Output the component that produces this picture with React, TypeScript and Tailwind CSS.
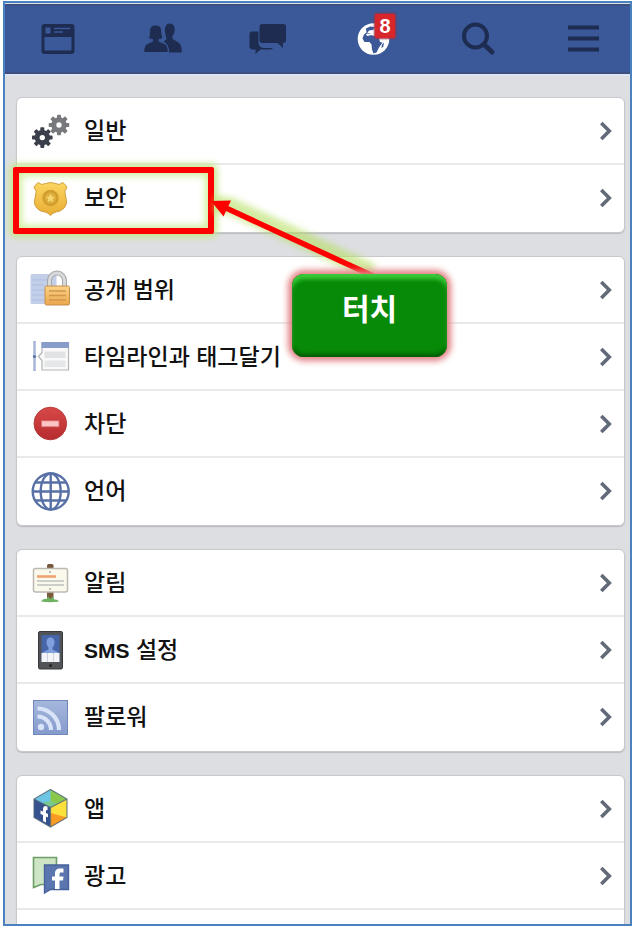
import type { ReactNode } from "react";

const teeth = [0, 45, 90, 135, 180, 225, 270, 315];

function Gear({ x, y, fill }: { x: number; y: number; fill: string }) {
  return (
    <g transform={`translate(${x} ${y})`}>
      <circle r="5.2" fill="none" stroke={fill} strokeWidth="5" />
      {teeth.map((a) => (
        <rect key={a} x="-2" y="-10.3" width="4" height="4" rx="0.8" fill={fill} transform={`rotate(${a})`} />
      ))}
    </g>
  );
}

function Icon({ children }: { children: ReactNode }) {
  return (
    <svg viewBox="0 0 40 40" className="h-10 w-10 shrink-0" aria-hidden="true">
      {children}
    </svg>
  );
}

const icons = {
  general: (
    <Icon>
      <Gear x={29} y={14} fill="#77797d" />
      <Gear x={12.3} y={26.6} fill="#3a3f4b" />
    </Icon>
  ),
  security: (
    <Icon>
      <defs>
        <linearGradient id="gold" x1="0" y1="0" x2="0" y2="1">
          <stop offset="0" stopColor="#fbd560" />
          <stop offset="1" stopColor="#e9ae35" />
        </linearGradient>
      </defs>
      <path
        d="M8 4.500 Q12 8 15.500 5.500 L20.500 4.500 L25.500 5.500 Q29 8 33 4.500 L37 9 Q33.500 13 35.500 18 Q38 26 34 30 Q31 33.500 26 34 Q23 34.500 20.500 37.500 Q18 34.500 15 34 Q9.500 33.500 6.800 30 Q3 26 5.500 18 Q7.500 13 4 9 Z"
        fill="url(#gold)"
        stroke="#cf9c3a"
        strokeWidth="1"
      />
      <circle cx="20.500" cy="20" r="8.200" fill="#d19d2c" />
      <circle cx="20.500" cy="20" r="5.800" fill="#dfae3c" />
      <path d="M20.500 15.800 l1.300 2.800 3 .3 -2.200 2.100 .6 3 -2.700 -1.500 -2.700 1.500 .6 -3 -2.200 -2.100 3 -.3z" fill="#f8d873" />
    </Icon>
  ),
  privacy: (
    <Icon>
      <defs>
        <linearGradient id="lockBody" x1="0" y1="0" x2="0" y2="1">
          <stop offset="0" stopColor="#fbd38a" />
          <stop offset="1" stopColor="#eba64c" />
        </linearGradient>
      </defs>
      <rect x="0.500" y="4" width="26" height="30" rx="1.500" fill="#c3cee9" />
      <path d="M2 10h16M2 15h12M2 20h12M2 25h12M2 30h12" stroke="#b5c3e3" strokeWidth="1.300" />
      <path d="M19.500 16V10.500a7.500 7.500 0 0 1 15 0V16" fill="none" stroke="#a7a8ab" strokeWidth="5" />
      <path d="M19.500 16V10.500a7.500 7.500 0 0 1 15 0V16" fill="none" stroke="#d8d9da" strokeWidth="3" />
      <rect x="15" y="16" width="24.500" height="19" rx="1.500" fill="url(#lockBody)" stroke="#c28e4b" />
      <path d="M19 21h17M19 25.500h17M19 30h17" stroke="#d1974c" strokeWidth="1.300" />
    </Icon>
  ),
  timeline: (
    <Icon>
      <path d="M4.500 4v30" stroke="#a9b8d9" strokeWidth="2.600" />
      <circle cx="4.500" cy="19.500" r="1.600" fill="#5a72a8" />
      <path d="M12 6h26.500v27H12v-9.500L8.500 19.500 12 15.500z" fill="#f9f9f9" stroke="#b4b5b8" strokeWidth="1.200" />
      <rect x="11.500" y="5" width="27.500" height="6" fill="#879cc9" />
      <rect x="14.500" y="14.500" width="21" height="6.500" fill="#e1e2e3" />
      <rect x="14.500" y="23.500" width="21" height="6.500" fill="#e6e7e8" />
    </Icon>
  ),
  block: (
    <Icon>
      <defs>
        <linearGradient id="stop" x1="0" y1="0" x2="0" y2="1">
          <stop offset="0" stopColor="#d84848" />
          <stop offset="1" stopColor="#b62c2f" />
        </linearGradient>
      </defs>
      <circle cx="20.300" cy="19.500" r="16.300" fill="url(#stop)" stroke="#b33a3b" />
      <rect x="11.500" y="16.800" width="17.500" height="6" fill="#fbc4c5" stroke="#d96a6b" strokeWidth="0.800" />
    </Icon>
  ),
  language: (
    <Icon>
      <g fill="none" stroke="#5870a6" strokeWidth="2.400">
        <circle cx="20.700" cy="20.500" r="18" />
        <ellipse cx="20.700" cy="20.500" rx="10" ry="18" />
        <path d="M20.700 2v37M3 20.500h36M6 11.500h30M6 29.500h30" />
      </g>
    </Icon>
  ),
  notifications: (
    <Icon>
      <rect x="17" y="1" width="6.500" height="6" rx="1.500" fill="#75593d" />
      <rect x="17" y="28" width="6.500" height="9" fill="#7a5b3c" />
      <path d="M11 38.500q2-3.500 6-2.500l1-3 2 3 3-2.500 1 3q4-.5 5 2-9 1.500-18 0z" fill="#6fb061" />
      <rect x="3.500" y="5.500" width="34" height="23.500" rx="2" fill="#fbf9ec" stroke="#bcb9b2" strokeWidth="1.500" />
      <path d="M7 13.500h19" stroke="#efa371" strokeWidth="2.600" />
      <path d="M7 18h27M7 22h27" stroke="#bfbfbd" strokeWidth="1.700" />
      <circle cx="20" cy="9" r="1" fill="#aaa" />
      <circle cx="20" cy="26" r="1" fill="#aaa" />
    </Icon>
  ),
  sms: (
    <Icon>
      <rect x="8.500" y="1.500" width="24" height="37.500" rx="1.500" fill="#515357" stroke="#36383c" />
      <rect x="11.500" y="5" width="18" height="27" fill="#4766a9" />
      <path d="M20.500 7.500c3 0 4 2.500 4 5 0 2-1 4-2 5v2l6 3v3H12.500v-3l6-3v-2c-1-1-2-3-2-5 0-2.500 1-5 4-5z" fill="#7fa0dc" />
      <rect x="11.500" y="23" width="18" height="9" fill="#f2f4f8" />
      <path d="M17.500 23v9M23.500 23v9" stroke="#ccd2df" />
      <circle cx="20.500" cy="35.500" r="1.500" fill="#222" />
    </Icon>
  ),
  followers: (
    <Icon>
      <defs>
        <linearGradient id="feed" x1="0" y1="0" x2="0" y2="1">
          <stop offset="0" stopColor="#a5b7dc" />
          <stop offset="1" stopColor="#859bcc" />
        </linearGradient>
      </defs>
      <rect x="3.500" y="3.500" width="34" height="34" fill="url(#feed)" stroke="#7088bb" />
      <circle cx="11" cy="30" r="3.200" fill="#d9e4f8" />
      <path d="M7.500 19.500A13.500 13.500 0 0 1 21 33M7.500 11.500A21.500 21.500 0 0 1 29 33" fill="none" stroke="#d9e4f8" strokeWidth="4.200" />
    </Icon>
  ),
  apps: (
    <Icon>
      <path d="M20.500 0.500 37 10 20.500 18.500 4 10z" fill="#6cc5e4" />
      <path d="M20.500 0.500 37 10 20.500 18.500z" fill="#8ac84c" />
      <path d="M20.500 12 28 14.500 20.500 18.500 12 14z" fill="#78c98c" />
      <path d="M4 10 20.500 18.500V38L4 28.500z" fill="#35528f" />
      <path d="M37 10 20.500 18.500V38L37 28.500z" fill="#fce03c" />
      <path d="M20.500 38 37 28.500 20.500 24z" fill="#f89a24" />
      <path d="M17.500 17.500c-3-1.500-4.500 0-4.500 3v2l-2.500-1v3.500l2.500 1v6l3 1.500V27.500l2 1v-3.500l-2-1v-2c0-1 .5-1.200 1.500-.7z" fill="#fff" />
      <path d="M20.500 0.500 37 10V28.500L20.500 38 4 28.500V10zM4 10 20.500 18.500 37 10M20.500 18.500V38" fill="none" stroke="#4f6475" strokeWidth="1.200" strokeOpacity="0.800" />
    </Icon>
  ),
  ads: (
    <Icon>
      <path d="M3.500 1.500h23v27H11l-7.500 3z" fill="#cde4c5" stroke="#6d9f68" strokeWidth="1.600" />
      <path d="M14.500 9h24v24.500H20.500l-6 3.500z" fill="#5b75ae" stroke="#47629c" strokeWidth="1.400" />
      <path d="M33.500 12.500v4h-2.300c-1.400 0-1.700.5-1.700 1.700v2.300h4l-.5 4h-3.500v8.500h-4.500v-8.500h-3v-4h3v-3c0-3.500 1.800-5 5-5z" fill="#fff" />
    </Icon>
  ),
};

type IconName = keyof typeof icons;

const groups: { icon: IconName; label: ReactNode }[][] = [
  [
    { icon: "general", label: "일반" },
    { icon: "security", label: "보안" },
  ],
  [
    { icon: "privacy", label: "공개 범위" },
    { icon: "timeline", label: "타임라인과 태그달기" },
    { icon: "block", label: "차단" },
    { icon: "language", label: "언어" },
  ],
  [
    { icon: "notifications", label: "알림" },
    {
      icon: "sms",
      label: (
        <>
          <b className="text-[21px] font-bold">SMS</b> 설정
        </>
      ),
    },
    { icon: "followers", label: "팔로워" },
  ],
  [
    { icon: "apps", label: "앱" },
    { icon: "ads", label: "광고" },
  ],
];

const navItems: { label: string; badge?: string; icon: ReactNode }[] = [
  {
    label: "News feed",
    icon: (
      <Icon>
        <path
          fillRule="evenodd"
          d="M6.500 5h27a3 3 0 0 1 3 3v24a3 3 0 0 1-3 3h-27a3 3 0 0 1-3-3V8a3 3 0 0 1 3-3zM6.500 18v13.500h27V18zM7.500 8.500v6h5V8.500z"
          fill="#1d2c50"
        />
        <path d="M16 9.500h16M16 13h9" stroke="#3b5998" strokeWidth="1.500" />
      </Icon>
    ),
  },
  {
    label: "Friend requests",
    icon: (
      <Icon>
        <path
          d="M26.500 4.500c4 0 5.500 3 5.200 6.500-.2 3-1.200 5-2.200 6v3c2 1.500 6 2.500 7.500 5 1.500 2.500 1.800 5 1.800 8.500H26c.2-6-2-9-5.500-11l3-2-1.200-6c-1-5 .2-10 4.200-10z"
          fill="#1d2c50"
        />
        <path
          d="M12.500 6c5 0 6.300 3.500 6.300 7.500 0 2.500.8 4.500 1.200 5.500-1 1-2.500 1.200-4 1.300v2c3 1.500 6.500 2 7.800 4.200 1.200 2 1.400 4 1.400 7H.8c0-3 .2-5 1.400-7C3.500 24.300 7 23.800 9.500 22.300v-2c-1.500-.1-3-.3-4-1.300.5-1 1-3 1-5.500C6.500 9.500 7.500 6 12.500 6z"
          fill="#1d2c50"
          stroke="#3b5998"
          strokeWidth="1"
        />
      </Icon>
    ),
  },
  {
    label: "Messages",
    icon: (
      <Icon>
        <path d="M4 12.500h6.500V24a5 5 0 0 0 5 5H25q-1 1.500-3.500 1.500H12.500L7.500 35v-4.500H5A3.500 3.500 0 0 1 1.500 27V15A2.500 2.500 0 0 1 4 12.500z" fill="#1d2c50" />
        <path d="M14.500 5h21A2.500 2.500 0 0 1 38 7.500V21a3 3 0 0 1-3 3v5l-5.500-5h-15a3 3 0 0 1-3-3V8a3 3 0 0 1 3-3z" fill="#1d2c50" />
      </Icon>
    ),
  },
  {
    label: "Notifications",
    badge: "8",
    icon: (
      <Icon>
        <circle cx="20.500" cy="20" r="15.800" fill="#fff" />
        <path
          d="M13 9.500l4-2 5 .5-2 3-4 .500-2 3 3-.5 2 2.500 4 .5 3 2 1 4 2.500.5-3.500 5-2.500 5-3 1-1.500-4-.5-5-2-2.500h-5l-2-3.500 1.500-4 2.500-2z"
          fill="#3b5998"
        />
        <path d="M13 15l5-.5 1 1.500-5 1z" fill="#fff" />
        <path d="M29 25.500l2-2-.8 4.500-1.800 1z" fill="#3b5998" />
      </Icon>
    ),
  },
  {
    label: "Search",
    icon: (
      <Icon>
        <circle cx="17.500" cy="17" r="11.500" fill="none" stroke="#1d2c50" strokeWidth="4" />
        <path d="M26 25.500l8 7.500" stroke="#1d2c50" strokeWidth="5" strokeLinecap="round" />
      </Icon>
    ),
  },
  {
    label: "Menu",
    icon: (
      <Icon>
        <path d="M5 8.500h31M5 19.500h31M5 30.500h31" stroke="#1d2c50" strokeWidth="4" />
      </Icon>
    ),
  },
];

function SettingsRow({ icon, label }: { icon: IconName; label: ReactNode }) {
  return (
    <li className="h-[67px] border-b-2 border-[#e9e9eb] last:border-b-0">
      <a href="#" className="flex h-[66px] items-center gap-[14px] pr-3 pl-[13px]">
        {icons[icon]}
        <span className="flex-1 whitespace-nowrap text-[23px] leading-8 font-medium text-[#111]">{label}</span>
        <svg viewBox="0 0 12 20" className="h-5 w-3 shrink-0" aria-hidden="true">
          <path d="M1.300 2l8 8-8 8" fill="none" stroke="#626977" strokeWidth="3.600" />
        </svg>
      </a>
    </li>
  );
}

// Red frame around the security row, with an arrow from the "touch" callout
function TouchHint() {
  return (
    <div className="pointer-events-none">
      <div className="absolute top-[69px] -left-1 h-[67px] w-[201px] rounded-xs border-6 border-[#fe0000] shadow-[0_0_7px_3px_#c6e88a,inset_0_0_7px_3px_#d3efa0]" />
      <svg viewBox="0 0 190 100" className="absolute top-[82px] left-[183px] h-[100px] w-[190px]" aria-hidden="true">
        <defs>
          <filter id="glow" x="-20%" y="-20%" width="140%" height="140%">
            <feGaussianBlur stdDeviation="3" />
          </filter>
        </defs>
        <path d="M14 24 L30 26 172 92" fill="none" stroke="#b5e061" strokeOpacity="0.600" strokeWidth="17" filter="url(#glow)" />
        <path d="M26 28L173 96" stroke="#fe0000" strokeWidth="5.500" />
        <path d="M11 21l20-.5-7.500 16z" fill="#fe0000" />
      </svg>
      <div className="absolute top-[176px] left-[275px] flex h-[83px] w-[155px] justify-center rounded-xl bg-[#078a07] pt-4 shadow-[0_0_6px_4px_#e38084,inset_0_5px_4px_#3ccb3c,inset_0_-3px_4px_#045a04,inset_0_0_3px_#045a04]">
        <span className="text-[30px] leading-10 font-bold text-white">터치</span>
      </div>
    </div>
  );
}

export default function App() {
  return (
    <div className="flex h-screen flex-col bg-white pt-px pr-px pb-px pl-[3px] font-['Liberation_Sans','Noto_Sans_CJK_KR',sans-serif]">
      <div className="flex min-h-0 flex-1 flex-col overflow-hidden border-2 border-[#4a81bf] bg-[#dddee2]">
        <nav className="mt-px flex h-[70px] shrink-0 items-center justify-between border-y-2 border-[#3c4f80] bg-[#3b5998] pr-[27px] pl-[33px]">
          {navItems.map((item) => (
            <button key={item.label} type="button" aria-label={item.label} className="relative h-10 w-10">
              {item.icon}
              {item.badge && (
                <span className="absolute -top-[5px] right-[-2px] flex h-6 w-5 items-center justify-center rounded-xs bg-[#d8272b] text-[20px] leading-6 font-bold text-white shadow-[0_0_2px_1px_#9b3049]">
                  {item.badge}
                </span>
              )}
            </button>
          ))}
        </nav>
        <div className="h-[2px] shrink-0 bg-[#dbe3f4]" />
        <main className="flex flex-col gap-[23px] pt-[21px] pr-[5px] pl-[11px]">
          {groups.map((rows, i) => (
            <section
              key={rows[0].icon}
              className={i === 0 ? "relative z-10 rounded-md border border-[#c6c8cc] bg-white shadow-[0_1px_1px_#b9bbbf]" : "rounded-md border border-[#c6c8cc] bg-white shadow-[0_1px_1px_#b9bbbf]"}
            >
              <ul>
                {rows.map((row) => (
                  <SettingsRow key={row.icon} icon={row.icon} label={row.label} />
                ))}
                {i === groups.length - 1 && <li className="h-[67px]" />}
              </ul>
              {i === 0 && <TouchHint />}
            </section>
          ))}
        </main>
      </div>
    </div>
  );
}
